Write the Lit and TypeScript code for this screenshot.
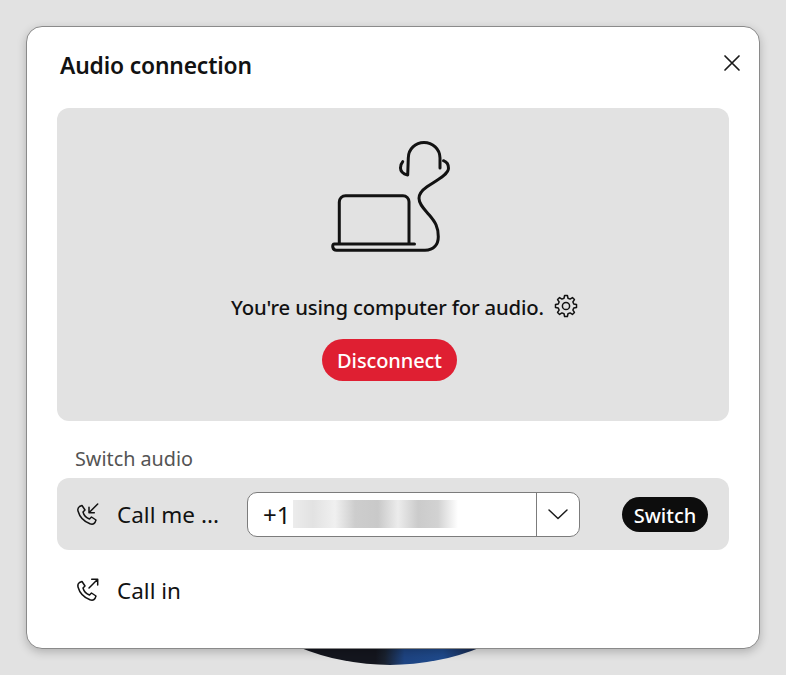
import { LitElement, html, css } from "lit";
import { customElement } from "lit/decorators.js";

// eight tooth cog outline, teeth narrower at the tip
const gearPath = () => {
  const pts: string[] = [];
  const teeth = 8;
  for (let i = 0; i < teeth; i++) {
    const a = (i / teeth) * Math.PI * 2 - Math.PI / 2;
    const step = (Math.PI * 2) / teeth;
    const spots: [number, number][] = [
      [8, a - step * 0.32],
      [10.6, a - step * 0.17],
      [10.6, a + step * 0.17],
      [8, a + step * 0.32],
    ];
    for (const [r, t] of spots) {
      pts.push(`${(12 + r * Math.cos(t)).toFixed(2)} ${(12 + r * Math.sin(t)).toFixed(2)}`);
    }
  }
  return `M${pts.join("L")}Z`;
};

@customElement("app-root")
export class AppRoot extends LitElement {
  static styles = css`
    :host {
      display: block;
      position: relative;
      width: 786px;
      height: 675px;
      overflow: hidden;
      box-sizing: border-box;
      padding: 26px;
      background: #e2e2e2;
      font-family: "Noto Sans", "Open Sans", sans-serif;
      color: #121212;
    }
    .backdrop {
      position: absolute;
      left: 149px;
      top: 183px;
      width: 482px;
      height: 482px;
      border-radius: 50%;
      background: linear-gradient(90deg, #14161e 0 47%, #1a2230 49%, #1e4482 53%, #1f4a8c 61%, #18274a 68%, #14161e 76%);
    }
    .dialog {
      position: relative;
      box-sizing: border-box;
      width: 734px;
      height: 623px;
      padding: 15px 30px 0 30px;
      background: #fff;
      border: 1px solid #8a8a8a;
      border-radius: 16px;
      box-shadow: 0 3px 10px rgba(0, 0, 0, 0.22);
      display: flex;
      flex-direction: column;
    }
    .head {
      display: flex;
      align-items: center;
      justify-content: space-between;
      height: 46px;
      padding-left: 3px;
      margin-bottom: 20px;
    }
    .title {
      font-size: 22.800px;
      font-weight: 600;
      letter-spacing: -0.15px;
    }
    .close {
      width: 18px;
      height: 18px;
      margin: 0 -12px 4px 0;
      display: block;
    }
    .panel {
      height: 313px;
      background: #e2e2e2;
      border-radius: 12px;
      display: flex;
      flex-direction: column;
      align-items: center;
      padding-top: 32px;
      box-sizing: border-box;
    }
    .illus {
      width: 120px;
      height: 114px;
      display: block;
      margin-right: 7px;
    }
    .status {
      display: flex;
      align-items: center;
      gap: 10px;
      margin: 40px 0 0 23px;
      font-size: 20.300px;
      font-weight: 500;
      line-height: 26px;
      letter-spacing: -0.15px;
    }
    .gear {
      width: 24px;
      height: 24px;
      display: block;
      margin-top: -2px;
    }
    .disconnect {
      margin: 19px 7px 0 0;
      height: 42px;
      width: 135px;
      border: 0;
      border-radius: 21px;
      background: #df1f32;
      color: #fff;
      font: 500 20px "Noto Sans", sans-serif;
      letter-spacing: -0.1px;
      padding: 0;
    }
    .label {
      margin: 25px 0 6px 18px;
      font-size: 19.800px;
      line-height: 26px;
      color: #545454;
    }
    .row {
      height: 72px;
      border-radius: 12px;
      display: flex;
      align-items: center;
      padding: 0 21px 0 18px;
    }
    .row.active {
      background: #e2e2e2;
    }
    .phone {
      width: 26px;
      height: 26px;
      display: block;
      flex: none;
    }
    .name {
      margin-left: 16px;
      font-size: 22.500px;
      line-height: 32px;
      padding-top: 1px;
      white-space: nowrap;
    }
    .active .name {
      width: 130px;
      flex: none;
    }
    .select {
      box-sizing: border-box;
      width: 333px;
      height: 45px;
      background: #fff;
      border: 1px solid #7c7c7c;
      border-radius: 10px;
      display: flex;
      align-items: stretch;
      overflow: hidden;
    }
    .value {
      flex: 1;
      display: flex;
      align-items: center;
      padding-left: 15px;
      font-size: 24px;
      border-right: 1px solid #7c7c7c;
    }
    .redacted {
      margin-left: 3px;
      width: 165px;
      height: 28px;
      background: linear-gradient(
        90deg,
        #ececec 0,
        #e2e2e2 20px,
        #f0f0f0 42px,
        #cdcdcd 62px,
        #c9c9c9 85px,
        #ececec 105px,
        #cbcbcb 125px,
        #d2d2d2 145px,
        #ffffff 165px
      );
    }
    .caret {
      width: 42px;
      display: flex;
      align-items: center;
      justify-content: center;
    }
    .caret svg {
      width: 22px;
      height: 12px;
      display: block;
    }
    .switch {
      margin-left: auto;
      width: 86px;
      height: 35px;
      border: 0;
      border-radius: 18px;
      background: #0d0d0d;
      color: #fff;
      font: 500 20px "Noto Sans", sans-serif;
      padding: 2px 0 0;
    }
    .row.plain {
      height: 80px;
    }
  `;

  render() {
    return html`
      <div class="backdrop"></div>
      <section class="dialog">
        <header class="head">
          <div class="title">Audio connection</div>
          <svg class="close" viewBox="0 0 18 18" fill="none" stroke="#1a1a1a" stroke-width="1.7" stroke-linecap="round">
            <path d="M2 2 16 16M16 2 2 16" />
          </svg>
        </header>
        <div class="panel">
          <svg class="illus" viewBox="330 140 120 114" fill="none" stroke="#121212" stroke-width="3" stroke-linecap="round" stroke-linejoin="round">
            <path d="M339.3 243.3V202a6.3 6.3 0 0 1 6.3-6.3H403a6 6 0 0 1 6 6v41.6" />
            <path d="M414.500 244H334c-2 0-2 6.300 2.500 6.300H425c9 0 13.300-6 13.300-13.600 0-10-3-14.500-9-21.700-5-6-10.300-10.500-10.300-16.700 0-5 3-8 8-11.500 8-5.600 21.500-12 21.500-18.600 0-4-2.300-6.500-5-7.500" />
            <path d="M440 168V158c0-9-7.500-15.500-16-15.500s-15.700 6.500-15.700 15.500l-.6 17c-4-1-7.200-3.500-7.200-7 0-2.500 1-5 2.200-6.300" />
          </svg>
          <div class="status">
            <span>You're using computer for audio.</span>
            <svg class="gear" viewBox="0 0 24 24" fill="none" stroke="#121212" stroke-width="1.500" stroke-linejoin="round">
              <circle cx="12" cy="12" r="3.600" />
              <path d=${gearPath()} />
            </svg>
          </div>
          <button class="disconnect">Disconnect</button>
        </div>
        <div class="label">Switch audio</div>
        <div class="row active">
          <svg class="phone" viewBox="0 0 26 26" fill="none" stroke="#121212" stroke-width="1.500" stroke-linecap="round" stroke-linejoin="round">
            <path d="M4.500 5.500 7 4.500l3 4.500-2 2c.8 3 3.500 6 6.500 7l2-2 4.500 3-1 2.500c-1 1.500-3 2-5 1.300C9 20.500 4.500 15.500 3 10c-.5-2 .2-3.500 1.500-4.500z" />
            <path d="M22.700 3 14 11.700M14 6.300v5.400h5.300" />
          </svg>
          <span class="name">Call me ...</span>
          <div class="select">
            <div class="value">+1<div class="redacted"></div></div>
            <div class="caret">
              <svg viewBox="0 0 22 12" fill="none" stroke="#1a1a1a" stroke-width="1.500" stroke-linecap="round" stroke-linejoin="round"><path d="M2 2l9 8.500L20 2" /></svg>
            </div>
          </div>
          <button class="switch">Switch</button>
        </div>
        <div class="row plain">
          <svg class="phone" viewBox="0 0 26 26" fill="none" stroke="#121212" stroke-width="1.500" stroke-linecap="round" stroke-linejoin="round">
            <path d="M4.500 5.500 7 4.500l3 4.500-2 2c.8 3 3.500 6 6.500 7l2-2 4.500 3-1 2.500c-1 1.500-3 2-5 1.300C9 20.500 4.500 15.500 3 10c-.5-2 .2-3.500 1.500-4.500z" />
            <path d="M14 11l8.700-8.700M16.700 2.300h6V8" />
          </svg>
          <span class="name">Call in</span>
        </div>
      </section>
    `;
  }
}
